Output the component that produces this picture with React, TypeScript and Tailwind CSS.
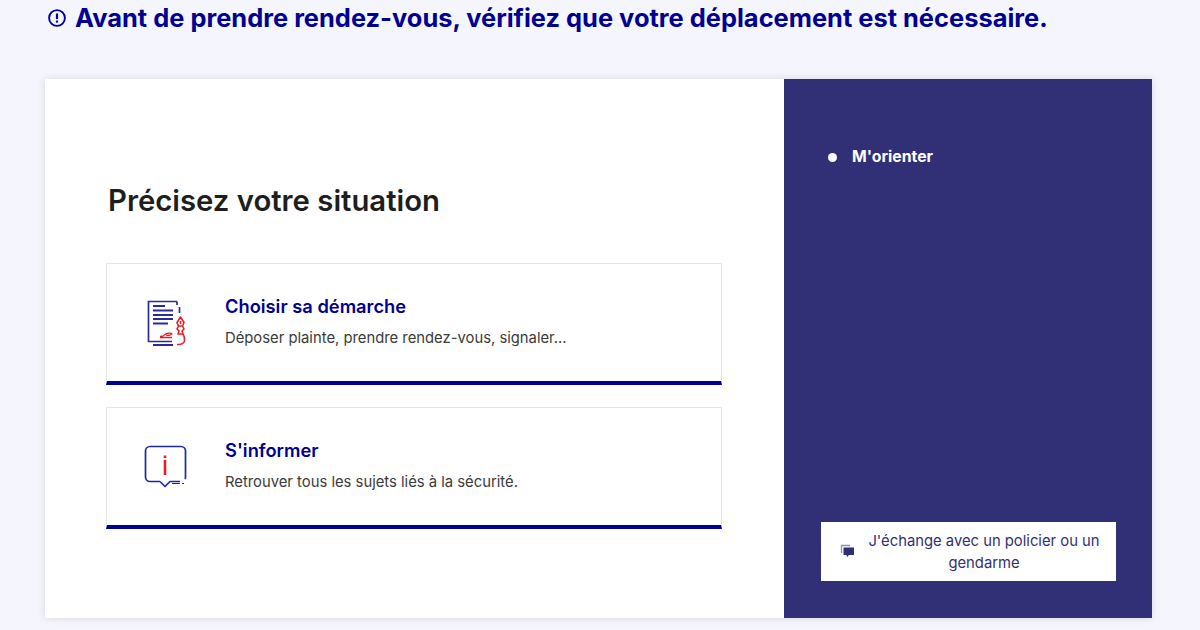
function AlertIcon() {
  return (
    <svg width="20" height="20" viewBox="0 0 20 20" fill="none" className="shrink-0">
      <circle cx="10" cy="10" r="7.900" stroke="#000091" strokeWidth="1.900" />
      <path d="M10 5.500v5.600" stroke="#000091" strokeWidth="2.200" />
      <path d="M10 12.600v2" stroke="#000091" strokeWidth="2.200" />
    </svg>
  );
}
function DocIcon() {
  return (
    <svg width="44" height="50" viewBox="145 298 44 50" fill="none" className="shrink-0 overflow-visible">
      <path d="M177 301.500H148.500V341.500H172" stroke="#2a2aa0" strokeWidth="1.700" />
      <path d="M177 301.500V305M179.500 307V313" stroke="#2a2aa0" strokeWidth="1.700" />
      <path d="M153 306H165M153 310.500H173M153 315H173M153 319H173M153 323.500H168M153 345H173" stroke="#2a2aa0" strokeWidth="1.800" />
      <path d="M160 336.500c3 0 4-.5 5-2 1.500-1.500 6-2 7-.5-1 1.500-5 1.500-6 1M160 337.500h12" stroke="#ea1c24" strokeWidth="1.300" />
      <path d="M180.500 317l-3.500 5.500 1.500 3.500h4l1.500-3.500zM180.500 321v3M178.500 326l-1.500 3 2 2-1 3h5l-1-3 2-2-1.500-3M183 334c1.500 2 1.800 5 1.500 7-.5 3-3 3.500-7.500 3.500" stroke="#ea1c24" strokeWidth="1.600" strokeLinejoin="round" />
    </svg>
  );
}
function InfoIcon() {
  return (
    <svg width="44" height="44" viewBox="145 445 44 44" fill="none" className="shrink-0 overflow-visible">
      <path d="M160 481.500h-10a4.500 4.500 0 0 1-4.500-4.500v-26a4.500 4.500 0 0 1 4.500-4.500h31a4.500 4.500 0 0 1 4.500 4.500v26a4.500 4.500 0 0 1-.5 2M160 481.500l5 5 5-5h10" stroke="#1f2a96" strokeWidth="1.700" strokeLinejoin="round" />
      <path d="M172 483.500h8M182 483.500h2" stroke="#1f2a96" strokeWidth="1.200" />
      <path d="M165 455.500v2.500M165 460v15" stroke="#ea1c24" strokeWidth="2.600" />
    </svg>
  );
}
function ChatIcon() {
  return (
    <svg width="15" height="15" viewBox="0 0 15 15" fill="none" className="shrink-0">
      <path d="M1.500 9V1.500H10" stroke="#8f8fb5" strokeWidth="1.300" />
      <path d="M3.500 3.500H14V11H8.800L7.500 13L6.200 11H3.500Z" fill="#313076" />
    </svg>
  );
}
function Tile({ title, desc, icon }: { title: string; desc: string; icon: React.ReactNode }) {
  return (
    <div className="h-[122px] flex items-center border border-[#e5e5e5] border-b-4 border-b-[#000091] bg-white">
      <div className="w-[118px] flex justify-start pl-[38px] shrink-0">{icon}</div>
      <div className="flex flex-col gap-[7px] -mt-[3px]">
        <div className="text-[18.300px] leading-[26px] font-semibold text-[#000091]">{title}</div>
        <div className="text-[14.800px] leading-[24px] text-[#3a3a3a]">{desc}</div>
      </div>
    </div>
  );
}
export default function App() {
  return (
    <div className="w-[1200px] h-[630px] overflow-hidden bg-[#f5f5fe] font-['Inter',sans-serif]">
      <div className="h-[79px] pl-[47px] flex items-start pt-[2px] gap-[8px]">
        <div className="h-[32px] flex items-center"><AlertIcon /></div>
        <h1 className="text-[25.450px] leading-[32px] font-bold text-[#000091] whitespace-nowrap">Avant de prendre rendez-vous, vérifiez que votre déplacement est nécessaire.</h1>
      </div>
      <div className="mx-[45px] w-[1107px] h-[539px] flex shadow-[0_0_8px_rgba(0,0,0,0.12)]">
        <div className="w-[739px] bg-white pl-[61px] pr-[62px] pt-[102px]">
          <h2 className="text-[29.300px] leading-[40px] font-semibold text-[#1e1e1e] pl-[2px] mb-[42px]">Précisez votre situation</h2>
          <div className="flex flex-col gap-[22px]">
            <Tile title="Choisir sa démarche" desc="Déposer plainte, prendre rendez-vous, signaler..." icon={<DocIcon />} />
            <Tile title="S'informer" desc="Retrouver tous les sujets liés à la sécurité." icon={<InfoIcon />} />
          </div>
        </div>
        <div className="flex-1 bg-[#313076] flex flex-col justify-between pt-[67px] pb-[37px] pl-[37px] pr-[36px]">
          <div className="flex items-center gap-[15px] pl-[7px] text-white text-[15.800px] leading-[22px] font-bold">
            <span className="w-[9px] h-[9px] rounded-full bg-white" />
            <span>M'orienter</span>
          </div>
          <div className="h-[59px] bg-white flex items-center pl-[19px] pr-[12px] gap-[9px] text-[#313076]">
            <ChatIcon />
            <div className="text-[14.800px] leading-[22px] text-center">J'échange avec un policier ou un gendarme</div>
          </div>
        </div>
      </div>
    </div>
  );
}
